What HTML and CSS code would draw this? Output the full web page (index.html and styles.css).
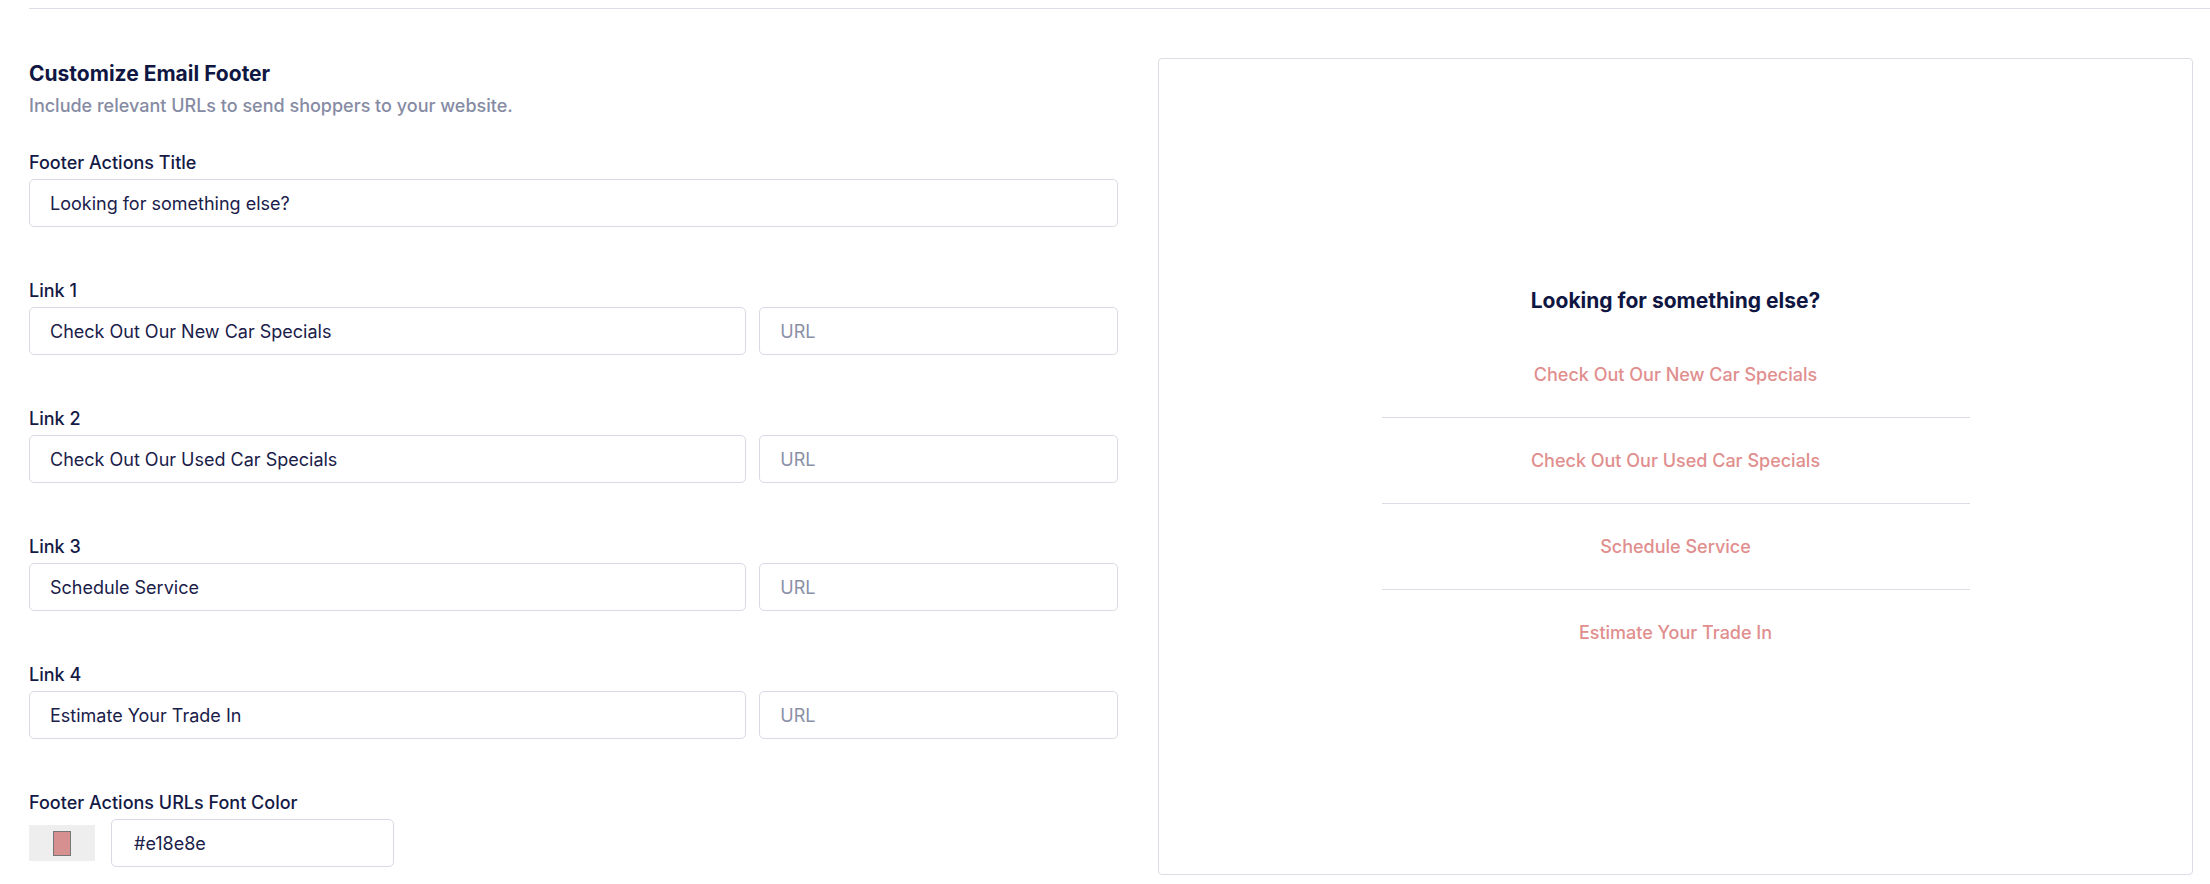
FILE: index.html
```html
<!DOCTYPE html>
<html lang="en">
<head>
<meta charset="utf-8">
<title>Customize Email Footer</title>
<link rel="stylesheet" href="styles.css">
</head>
<body>
<div class="page">
  <div class="rule"></div>
  <div class="layout">
    <section class="form">
      <h2 class="heading">Customize Email Footer</h2>
      <p class="subtitle">Include relevant URLs to send shoppers to your website.</p>

      <div class="field field-first">
        <label class="label">Footer Actions Title</label>
        <input class="input" type="text" value="Looking for something else?">
      </div>

      <div class="field">
        <label class="label">Link 1</label>
        <div class="pair">
          <input class="input" type="text" value="Check Out Our New Car Specials">
          <input class="input" type="text" placeholder="URL">
        </div>
      </div>

      <div class="field">
        <label class="label">Link 2</label>
        <div class="pair">
          <input class="input" type="text" value="Check Out Our Used Car Specials">
          <input class="input" type="text" placeholder="URL">
        </div>
      </div>

      <div class="field">
        <label class="label">Link 3</label>
        <div class="pair">
          <input class="input" type="text" value="Schedule Service">
          <input class="input" type="text" placeholder="URL">
        </div>
      </div>

      <div class="field">
        <label class="label">Link 4</label>
        <div class="pair">
          <input class="input" type="text" value="Estimate Your Trade In">
          <input class="input" type="text" placeholder="URL">
        </div>
      </div>

      <div class="field">
        <label class="label">Footer Actions URLs Font Color</label>
        <div class="color-row">
          <div class="swatch"><span class="swatch-fill"></span></div>
          <input class="input hex" type="text" value="#e18e8e">
        </div>
      </div>
    </section>

    <aside class="preview">
      <div class="preview-inner">
        <div class="preview-title">Looking for something else?</div>
        <ul class="preview-links">
          <li class="preview-item"><a class="preview-link">Check Out Our New Car Specials</a></li>
          <li class="preview-item"><a class="preview-link">Check Out Our Used Car Specials</a></li>
          <li class="preview-item"><a class="preview-link">Schedule Service</a></li>
          <li class="preview-item"><a class="preview-link">Estimate Your Trade In</a></li>
        </ul>
      </div>
    </aside>
  </div>
</div>
</body>
</html>
```
FILE: styles.css
```css
* { box-sizing: border-box; }

html, body {
  margin: 0;
  padding: 0;
  background: #ffffff;
}

body {
  font-family: "Inter", "Noto Sans", sans-serif;
  color: #141a45;
  overflow: hidden;
}

.page {
  padding-left: 29px;
  padding-top: 8px;
}

.rule {
  height: 1px;
  background: #dcdde5;
}

.layout {
  display: grid;
  grid-template-columns: 1089px 1fr;
  column-gap: 40px;
  padding-right: 17px;
  margin-top: 49px;
  align-items: stretch;
}

.form {
  padding-top: 2px;
  padding-bottom: 8px;
}

.heading {
  margin: 0;
  font-size: 21px;
  line-height: 28px;
  font-weight: 700;
  color: #0f1642;
  letter-spacing: 0;
}

.subtitle {
  margin: 6px 0 0;
  font-size: 18px;
  line-height: 24px;
  font-weight: 500;
  color: #868ba4;
}

.field {
  display: flex;
  flex-direction: column;
  gap: 4px;
  margin-top: 52px;
}

.field-first {
  margin-top: 33px;
}

.label {
  font-size: 18px;
  line-height: 24px;
  font-weight: 500;
  color: #141a45;
}

.input {
  display: block;
  width: 100%;
  height: 48px;
  padding: 0 20px;
  border: 1px solid #d9dbe4;
  border-radius: 5px;
  background: #ffffff;
  font-family: "Inter", "Noto Sans", sans-serif;
  font-size: 18px;
  font-weight: 400;
  color: #1a2049;
  outline: none;
}

.input::placeholder {
  color: #8b90a6;
}

.pair {
  display: grid;
  grid-template-columns: 2fr 1fr;
  column-gap: 13px;
}

.color-row {
  display: flex;
  align-items: center;
  gap: 16px;
}

.swatch {
  width: 66px;
  height: 36px;
  background: #eeeeee;
  display: flex;
  align-items: center;
  justify-content: center;
}

.swatch-fill {
  display: block;
  width: 18px;
  height: 25px;
  background: #d69090;
  border: 1px solid #767676;
}

.hex {
  width: 283px;
  padding-left: 22px;
}

.preview {
  border: 1px solid #dcdde4;
  border-radius: 4px;
  display: flex;
  align-items: center;
  justify-content: center;
  padding-bottom: 2px;
}

.preview-inner {
  width: 588px;
  display: flex;
  flex-direction: column;
  align-items: center;
}

.preview-title {
  font-size: 21px;
  line-height: 28px;
  font-weight: 700;
  color: #0f1642;
  margin-bottom: 17px;
}

.preview-links {
  list-style: none;
  margin: 0;
  padding: 0;
  width: 100%;
}

.preview-item {
  padding: 31px 0 30px;
  border-bottom: 1px solid #dcdde4;
  text-align: center;
  line-height: 24px;
}

.preview-item:last-child {
  padding-bottom: 0;
  border-bottom: none;
}

.preview-link {
  font-size: 18px;
  font-weight: 500;
  color: #e18e8e;
  text-decoration: none;
}
```
